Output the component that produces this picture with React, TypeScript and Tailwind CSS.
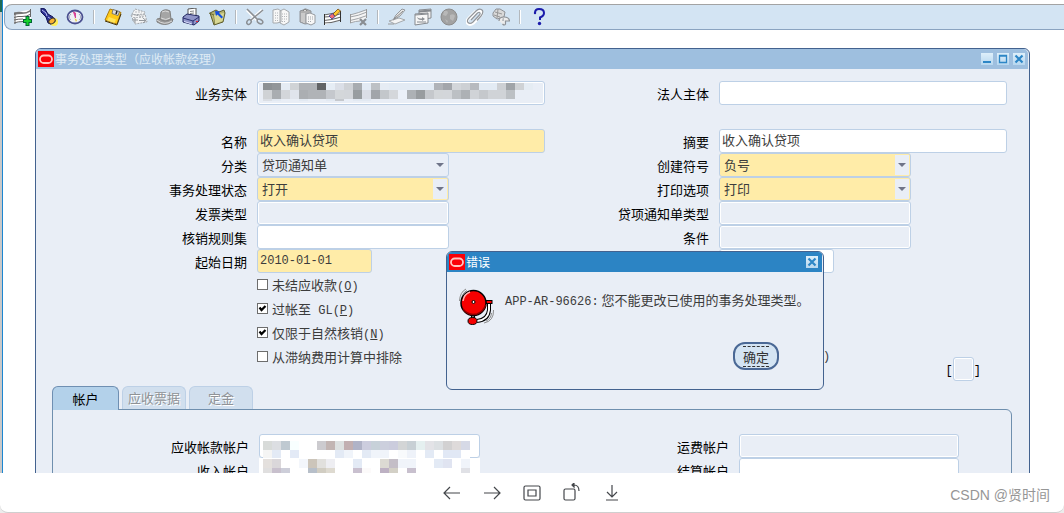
import { useId, useState } from "react";
import type { ReactNode } from "react";

const NAME_PIXELS = [
  {
    h: 7,
    cells:
      "8d9194 929699 e5ecf4 d0d3d6 b0b3b7 b0b3b7 626466 e6edf5 dbdfe7 cfd2d6 a8acb0 e3ebf4 bdc1c5 e6ecf4 e3ebf4 e3ebf4 e3ebf4 e3ebf4 e3ebf4 b0b3b8 a3a6ab d3d6da cdd0d4 b7babf e3ebf4 e3ebf4 cdd0d4 a0a4a8 cfd2d5 e5ecf3",
  },
  {
    h: 9,
    cells:
      "cfd2d5 a9adb1 d3d6da e0e4ec abaeb2 b0b3b7 b0b3b7 c5c8cd d4d7da d3d6da 989da0 dadee6 a1a5aa c3c7cb d4d7db ebf0f8 adb1b5 989c9f c5c8cc d3d6d9 d3d6da bcc0c4 adb1b5 d0d3d7 c5c8cc d0d3d7 d0d3d7 bcc0c4",
  },
  { h: 2, cells: "dadee4 e2e9f2 e9eef6 e9eef6 e2e9f2 e9eef6 e9eef6 e2e9f2 c5c8cd e9eef6 e2e9f2 e2e9f2" },
];

const RECEIVABLE_PIXELS = [
  {
    h: 9,
    cells:
      "d8dbd9 dcdee2 bfc9d1 f8ffff ffffff ffffff cccbcf c2b5b3 dde1e1 c2afb1 b0b3c7 cccdde c7d1d9 cccfdd cbccdd d3d5d6 c8d0d5 e5f0f0 e3e3e7 dce0e3 d2d1d2 dedada d6d9e6",
  },
  {
    h: 9,
    cells:
      "f5f5f4 e3eaf5 ffffff e3eaf6 ffffff ffffff ffffff ffffff e3eaf5 f0f4fa ffffff e3eaf5 f0f4fa f0f4fa ffffff f8fafc eef2f9 ffffff e3eaf5 ffffff e1e8f5 e1e8f5 ffffff",
  },
];

const REVENUE_PIXELS = [
  {
    h: 9,
    cells:
      "e4e0dd dad7da ffffff ffffff f3f6fb ccc5ba e1e0dd eeeef2 ffffff ffffff e3eaf5 ffffff ffffff dcdad3 c4bec7 f0f4fa f0f4fa ffffff ffffff e3eaf5 e0e4f1 ffffff f0f4fa",
  },
  {
    h: 9,
    cells:
      "e0dfdf c8c0cd cdced9 ffffff ffffff b7bfc9 d1cdc2 dedad0 ffffff ffffff c9c0cf fcfafa ffffff bdb1c3 d3d0c6 ffffff c8c0ce ffffff ffffff ffffff ffffff ffffff e0e1e6",
  },
];

function Mosaic({ rows, className }: { rows: typeof NAME_PIXELS; className: string }) {
  let y = 0;
  return (
    <svg width="270" height="18" shapeRendering="crispEdges" aria-hidden="true" className={`absolute ${className}`}>
      {rows.map((row, r) => {
        const top = y;
        y += row.h;
        return row.cells
          .split(" ")
          .map((c, i) => <rect key={`${r}-${i}`} x={i * 9} y={top} width="9" height={row.h} fill={`#${c}`} />);
      })}
    </svg>
  );
}

/* ---------- toolbar icons ---------- */

const TOOLS: ({ label: string; art: ReactNode } | null)[] = [
  {
    label: "新建",
    art: (
      <>
        <path d="M0 5 6 3.500 17 1.500V11L10 13 0 15Z" fill="#fff" />
        <path d="M0 5Q4 3 8 4T17 1.500V3.500Q12 6 8 6T0 7Z" fill="#777" />
        <path d="M0 9.500Q4 8 8 8.500T17 6M0 12Q4 11 9 11M0 15Q4 13.500 9 13.500M1 4V16M16.500 1V9" stroke="#666" fill="none" />
        <path d="M13.500 8V18M9 13H18" stroke="#063" strokeWidth="4" />
        <path d="M13.500 9V17M10 13H17" stroke="#16d02c" strokeWidth="2" />
      </>
    ),
  },
  {
    label: "查找",
    art: (
      <>
        <circle cx="14" cy="14" r="4" fill="#ffee58" />
        <path d="M1 0 5 1 8 6 13 9 14 13 11 16 8 15 6 9 1 4Z" fill="#2d3193" stroke="#111457" />
        <path d="M2 2 6 5 7 8M8 9 11 11" stroke="#b9bdf5" fill="none" />
        <ellipse cx="12" cy="13" rx="3.500" ry="2.500" transform="rotate(-35 12 13)" fill="#f9b233" stroke="#333" />
      </>
    ),
  },
  {
    label: "显示导航器",
    art: (
      <>
        <ellipse cx="9" cy="9" rx="7.500" ry="6.500" fill="#eef1f5" stroke="#4a5090" strokeWidth="1.800" />
        <path d="M5 12A5 4 0 0 1 5 6M13 6A5 4 0 0 1 13 12" stroke="#a3a9c4" fill="none" />
        <path d="M7.500 4 9.500 5 9.500 10Z" fill="#e43b9b" stroke="#d2358c" strokeWidth=".8" />
        <path d="M8.500 10 10 14 11 12Z" fill="#e3cd32" />
      </>
    ),
  },
  null,
  {
    label: "保存",
    art: (
      <>
        <path d="M6 1 17 4.500 13 16 1 12Z" fill="#ffc917" stroke="#a87a10" />
        <path d="M9 1.500 15.500 3.500 14 7.500 8 5.500Z" fill="#ddd" stroke="#666" strokeWidth=".8" />
        <path d="M13 3 12 6" stroke="#222" strokeWidth="1.500" />
        <path d="M5 9 12 11.500 10.500 15 3 12.500Z" fill="#ffe45b" />
        <path d="M1 13 13 17 17 6" stroke="#4a3504" fill="none" />
      </>
    ),
  },
  {
    label: "下一步",
    art: (
      <>
        <path d="M5 1 15 4 13 9 2 6Z M1 7 15 6 17 14 5 16Z" fill="#f3f4f5" stroke="#a2a6ab" strokeDasharray="2 1" />
        <path d="M5 4H12M5 7H14M3 9.500H13" stroke="#b9bcc0" strokeDasharray="2 1" />
        <path d="M2 12H8M5 9.500V15M9 12.500H16M13 10 16 12.500 13 15" stroke="#94989d" fill="none" />
      </>
    ),
  },
  {
    label: "切换责任",
    art: (
      <>
        <path d="M1 11Q8 8 17 11L16 14Q9 19 1 14Z" fill="#9b9b9b" stroke="#7f7f7f" />
        <path d="M5 4Q9 0 14 3L15 11Q9 15 4 11Z" fill="#a5a5a5" stroke="#808080" />
        <path d="M6 4Q9 2 13 4M5 10Q10 13 14 10M1 12Q8 18 16 13" stroke="#dadada" fill="none" />
      </>
    ),
  },
  {
    label: "打印",
    art: (
      <>
        <path d="M6 1 14 0 14 9 6 9Z" fill="#fff" stroke="#555" />
        <path d="M8 3.500 12 3M8 5.500 12 5" stroke="#888" />
        <path d="M1 9 5 6 17 8V13L12 17 1 14Z" fill="#8f95c8" stroke="#222760" />
        <path d="M1 10 11 13 17 9M11 13V17" stroke="#2b3073" fill="none" />
        <path d="M2 13.500 10 16" stroke="#dfe2ff" />
        <path d="M14 13.500h2" stroke="#e23" />
      </>
    ),
  },
  {
    label: "关闭窗体",
    art: (
      <>
        <path d="M2 5 8 2 11 4 16 2 17 5 15 14 6 17Z" fill="#b5b471" stroke="#5d5c2c" />
        <path d="M1 5 6 7 7 17" stroke="#6b6a33" fill="none" />
        <path d="M6 7 16 5 14.500 13 7 16Z" fill="#d9d894" />
        <path d="M7 3 12 3.500 11 5 15 9 13.500 10.500 9.500 6.500 8 8Z" fill="#1450e0" />
      </>
    ),
  },
  null,
  {
    label: "剪切",
    art: (
      <>
        <path d="M1 2 12 13M16 2 5 12" stroke="#fff" strokeWidth="3" />
        <path d="M1 1 12 12M17 2 5 12" stroke="#8b8f94" strokeWidth="1.600" />
        <ellipse cx="3" cy="14" rx="2" ry="2.500" transform="rotate(35 3 14)" fill="none" stroke="#8b8f94" strokeWidth="1.500" />
        <ellipse cx="14" cy="13.500" rx="3" ry="2" transform="rotate(30 14 13.500)" fill="none" stroke="#8b8f94" strokeWidth="1.500" />
      </>
    ),
  },
  {
    label: "复制",
    art: (
      <>
        <path d="M1 2 6 1 9 3V14L5 15 1 15Z M8 3 12 1 17 4V14L12 17 8 15Z" fill="#f7f7f7" stroke="#a5a9ad" />
        <path d="M3 5H7M3 7.500H7M3 10H7M3 12.500H7M10 6H15M10 8.500H15M10 11H15M10 13.500H14" stroke="#b4b7bb" strokeDasharray="1 1" />
      </>
    ),
  },
  {
    label: "粘贴",
    art: (
      <>
        <path d="M2 3 8 1 13 3V15L7 16 2 14Z" fill="#b0b0b0" stroke="#909499" />
        <path d="M5 3Q7-1 9 3" stroke="#777" fill="#ddd" />
        <path d="M4 5V14M6 5V15" stroke="#e4e4e4" />
        <path d="M8 6 12 5 17 7V15L13 17 8 15Z" fill="#f7f7f7" stroke="#979ba0" />
        <path d="M10 9H15M10 11H15M10 13.500H14" stroke="#a2a6ab" strokeDasharray="1 1" />
      </>
    ),
  },
  {
    label: "清除记录",
    art: (
      <>
        <path d="M0 7 17 4V13L10 14 0 17Z" fill="#fff" />
        <path d="M0 7Q8 6 17 3M0 9Q8 9 17 5.500M0 12.500Q8 12 17 9M0 15Q8 15 17 12" stroke="#666" strokeWidth="1.200" fill="none" />
        <path d="M.5 6V17M16.500 3V14" stroke="#333" />
        <path d="M9 6 14 1 16.500 3 11 8.500Z" fill="#ffc52e" stroke="#704710" strokeWidth=".8" />
        <path d="M5 8 8.500 5.500 11 8.500 8 11Z" fill="#f46d74" stroke="#353599" strokeWidth=".8" />
      </>
    ),
  },
  {
    label: "删除记录",
    art: (
      <>
        <path d="M0 7 17 2V10L10 13 0 15Z" fill="#f4f4f4" />
        <path d="M0 7Q8 5 17 1.500M0 9Q8 8 17 4M0 12.500Q8 11 17 7.500M0 15Q6 13 10 13" stroke="#a0a4a9" fill="none" />
        <path d="M.5 6V15M16.500 1V10" stroke="#999" />
        <path d="M10 11 16 17M16 11 10 17" stroke="#898d92" strokeWidth="2.200" />
      </>
    ),
  },
  null,
  {
    label: "编辑字段",
    art: (
      <>
        <path d="M1 13 11 10 17 12 7 16Z" fill="#f4f4f4" stroke="#a5a9ad" />
        <path d="M5 12 8 7 14 1 17 2 12 8Z" fill="#e9e9e9" stroke="#94989d" />
        <path d="M6 11 15 3" stroke="#888" />
        <path d="M0 16H6" stroke="#999" />
      </>
    ),
  },
  {
    label: "缩放",
    art: (
      <>
        <path d="M5 2 17 1V10L5 12Z" fill="#eee" stroke="#85898e" />
        <path d="M5 3.500 17 2.500" stroke="#85898e" strokeWidth="2" />
        <path d="M1 6 14 5V15L1 17Z" fill="#f7f7f7" stroke="#85898e" />
        <path d="M1 7 14 6M3 14H12" stroke="#85898e" />
        <path d="M3 9Q5 11 8 10.500V9L11 11 8 13V12Q4 12.500 3 9Z" fill="#8b8f94" />
      </>
    ),
  },
  {
    label: "翻译",
    art: (
      <>
        <circle cx="9" cy="9" r="8" fill="#a2a2a2" stroke="#8c8c8c" />
        <path d="M4 3Q8 2 8 5L6 8 3 7ZM10 7Q14 5 15 8L13 13 10 11ZM5 11 8 13 7 15Z" fill="#b8b8b8" />
      </>
    ),
  },
  {
    label: "附件",
    art: (
      <>
        <path d="M4 11 11 4Q14 1.500 15.500 4 16.500 6 14 8.500L7.500 15Q4 17.500 1.800 15.500 0 13 3 10L10 3" fill="none" stroke="#fff" strokeWidth="3" />
        <path
          d="M5 12 11.500 5Q13.500 3.500 14 5 14.500 6 13 7.500L7 14Q4 16.500 2 14.500 .5 12.500 3 10L10 3Q14-.5 16.500 2.500 17.500 5 15 8L11 12.500"
          fill="none"
          stroke="#92969b"
          strokeWidth="1.200"
        />
      </>
    ),
  },
  {
    label: "文件夹工具",
    art: (
      <>
        <path d="M1 5 4 1H8L13 4 12 9 5 11 1 8Z" fill="#d9d9d9" stroke="#8d9196" />
        <path d="M3 4 10 6M2 7 8 9M6 1 5 10" stroke="#999" fill="none" />
        <path d="M7 13Q7 9 12 9 17 9 17.500 13H13.500V16Q12.500 18 10.500 16" stroke="#8d9196" strokeWidth="1.200" fill="#ececec" />
        <path d="M10 13Q10 10 12 9V13Z" fill="#b9bcc0" />
      </>
    ),
  },
  null,
  {
    label: "帮助",
    art: (
      <>
        <path d="M5 5Q5 1 9 1 14 1 14 5 14 8 10 9.500V12" fill="none" stroke="#1b1baa" strokeWidth="2" />
        <circle cx="9.500" cy="15.500" r="1.700" fill="#1b1baa" />
        <circle cx="5" cy="5" r="1.200" fill="#1b1baa" />
      </>
    ),
  },
];

function Toolbar() {
  return (
    <div className="mt-1 ml-px h-[26px] flex items-center gap-2 pl-[9px] rounded-l-lg border border-r-0 border-t-[#a3a3a3] border-l-[#8aa3c0] border-b-[#8aa3c0] bg-[#d3e4f3]">
      {TOOLS.map((t, i) =>
        t ? (
          <button key={i} type="button" title={t.label} aria-label={t.label} className="shrink-0">
            <svg width="18" height="18" viewBox="0 0 18 18" className="block">
              {t.art}
            </svg>
          </button>
        ) : (
          <span key={i} className="w-1 shrink-0 flex justify-center">
            <span className="w-0.5 h-3.5 bg-white border-l border-[#b3b8bd]" />
          </span>
        ),
      )}
    </div>
  );
}

/* ---------- window chrome ---------- */

function OracleMark() {
  return (
    <svg width="16" height="16" viewBox="0 0 16 16" className="shrink-0" aria-hidden="true">
      <rect width="16" height="16" fill="#fb0007" />
      <rect x="2" y="4.500" width="12" height="7.500" rx="3.700" fill="none" stroke="#ffc4c0" strokeWidth="1.800" />
    </svg>
  );
}

function ChromeButton({ label, children }: { label: string; children: ReactNode }) {
  return (
    <button type="button" aria-label={label} className="size-3 bg-linear-to-b from-[#deeffa] to-[#b7d7ef]">
      <svg width="12" height="12" viewBox="0 0 12 12" fill="none" stroke="#2d86c6" strokeWidth="2" className="block">
        {children}
      </svg>
    </button>
  );
}

const closeGlyph = <path d="M2.500 2.500 9.500 9.500M9.500 2.500 2.500 9.500" strokeWidth="2.200" />;

/* ---------- form pieces ---------- */

const FIELD = "block h-6 border border-[#bdd0e6] rounded-[3px] text-[#3c3c3c] outline-none";
const WHITE = "bg-white";
const YELLOW = "bg-[#ffeca8]";
const GREY = "bg-[#e9eef6] shadow-[inset_0_0_0_1px_#fff]";
const MONO = "font-['Liberation_Mono',monospace] text-xs";

function Row({
  label,
  labelWidth,
  children,
}: {
  label: string;
  labelWidth: string;
  children: (id: string) => ReactNode;
}) {
  const id = useId();
  return (
    <div className="flex h-6 gap-2.5">
      <label htmlFor={id} className={`${labelWidth} shrink-0 pt-px text-right leading-6 text-black whitespace-nowrap`}>
        {label}
      </label>
      {children(id)}
    </div>
  );
}

function Field({ id, tone, width, value = "", mono }: { id: string; tone: string; width: string; value?: string; mono?: boolean }) {
  return (
    <input
      id={id}
      defaultValue={value}
      className={`${FIELD} ${tone} ${width} px-0.5 ${mono ? MONO : "pb-1"}`}
    />
  );
}

function Picker({ id, yellow, options }: { id: string; yellow?: boolean; options: string[] }) {
  return (
    <div className="relative w-48">
      <select id={id} className={`${FIELD} ${yellow ? YELLOW : "bg-[#e9eef6]"} w-full appearance-none px-1`}>
        {options.map((o) => (
          <option key={o}>{o}</option>
        ))}
      </select>
      <span className="absolute right-0.5 top-0.5 w-3.5 h-5 grid place-items-center bg-[#e9eef6] pointer-events-none">
        <svg width="8" height="4" viewBox="0 0 8 4">
          <path d="M0 0H8L4 4Z" fill="#6f7488" />
        </svg>
      </span>
    </div>
  );
}

function Check({ text, latin, hotkey, on }: { text: string; latin?: string; hotkey?: string; on?: boolean }) {
  const [checked, setChecked] = useState(!!on);
  return (
    <label className="ml-[221px] h-6 flex items-center gap-1 text-[#3c3c3c]">
      <span className="grid pb-0.5">
        <input
          type="checkbox"
          checked={checked}
          onChange={(e) => setChecked(e.target.checked)}
          className="col-start-1 row-start-1 appearance-none size-[11px] border border-[#6d6d6d] bg-white"
        />
        {checked && (
          <svg width="11" height="11" viewBox="0 0 11 11" className="col-start-1 row-start-1 pointer-events-none">
            <path d="M2.500 4.500 4.500 7 8.500 3" fill="none" stroke="#000" strokeWidth="2.200" />
          </svg>
        )}
      </span>
      <span>
        {text}
        {hotkey && (
          <span className={MONO}>
            {latin && ` ${latin}`}(<u>{hotkey}</u>)
          </span>
        )}
      </span>
    </label>
  );
}

function FormGrid() {
  const L = "w-[211px]";
  const R = "w-[164px]";
  return (
    <div className="flex pt-3">
      <div className="w-[509px] shrink-0">
        <div className="relative mb-6">
          <Row label="业务实体" labelWidth={L}>{(id) => <Field id={id} tone={GREY} width="w-72" />}</Row>
          <Mosaic rows={NAME_PIXELS} className="left-[227px] top-0.5" />
        </div>
        <Row label="名称" labelWidth={L}>{(id) => <Field id={id} tone={YELLOW} width="w-72" value="收入确认贷项" />}</Row>
        <Row label="分类" labelWidth={L}>{(id) => <Picker id={id} options={["贷项通知单"]} />}</Row>
        <Row label="事务处理状态" labelWidth={L}>{(id) => <Picker id={id} yellow options={["打开"]} />}</Row>
        <Row label="发票类型" labelWidth={L}>{(id) => <Field id={id} tone={GREY} width="w-48" />}</Row>
        <Row label="核销规则集" labelWidth={L}>{(id) => <Field id={id} tone={WHITE} width="w-48" />}</Row>
        <Row label="起始日期" labelWidth={L}>
          {(id) => <Field id={id} tone={YELLOW} width="w-[115px]" value="2010-01-01" mono />}
        </Row>
        <Check text="未结应收款" hotkey="O" />
        <Check text="过帐至" latin="GL" hotkey="P" on />
        <Check text="仅限于自然核销" hotkey="N" on />
        <Check text="从滞纳费用计算中排除" />
      </div>

      <div className="flex-1 min-w-0">
        <div className="mb-6">
          <Row label="法人主体" labelWidth={R}>{(id) => <Field id={id} tone={WHITE} width="w-72" />}</Row>
        </div>
        <Row label="摘要" labelWidth={R}>{(id) => <Field id={id} tone={WHITE} width="w-72" value="收入确认贷项" />}</Row>
        <Row label="创建符号" labelWidth={R}>{(id) => <Picker id={id} yellow options={["负号"]} />}</Row>
        <Row label="打印选项" labelWidth={R}>{(id) => <Picker id={id} yellow options={["打印"]} />}</Row>
        <Row label="贷项通知单类型" labelWidth={R}>{(id) => <Field id={id} tone={GREY} width="w-48" />}</Row>
        <Row label="条件" labelWidth={R}>{(id) => <Field id={id} tone={GREY} width="w-48" />}</Row>
        <Row label="" labelWidth={R}>{(id) => <Field id={id} tone={WHITE} width="w-[115px]" />}</Row>
        <div className={`mt-[72px] flex justify-between pl-[278px] pr-12 leading-6 ${MONO}`}>
          <span className="text-[#3c3c3c]">)</span>
          <label className="flex h-6 mt-3 leading-7 text-black">
            [
            <input className={`${FIELD} ${GREY} w-[21px]`} />]
          </label>
        </div>
      </div>
    </div>
  );
}

const TABS = ["帐户", "应收票据", "定金"];

function AccountTabs() {
  const [active, setActive] = useState(0);
  return (
    <div className="ml-4 mr-[17px] mt-[5px]">
      <div role="tablist" className="flex gap-[3px]">
        {TABS.map((t, i) => (
          <button
            key={t}
            type="button"
            role="tab"
            aria-selected={i === active}
            onClick={() => setActive(i)}
            className={
              i === active
                ? "relative -mb-px h-6 w-[67px] rounded-t-md border border-b-0 border-[#6f8fb2] bg-[#b3d1ea] text-black"
                : "h-[23px] w-16 rounded-t-md border border-b-0 border-[#bdd0e6] bg-[#d1dfee] text-[#8f9296] [text-shadow:1px_1px_#fff]"
            }
          >
            {t}
          </button>
        ))}
      </div>
      <div role="tabpanel" className="flex border border-[#6f8fae] rounded-tr-md pt-6 pb-10">
        <div>
          <div className="relative">
            <Row label="应收帐款帐户" labelWidth="w-[196px]">{(id) => <Field id={id} tone={WHITE} width="w-[221px]" />}</Row>
            <Mosaic rows={RECEIVABLE_PIXELS} className="left-[210px] top-[7px]" />
          </div>
          <div className="relative">
            <Row label="收入帐户" labelWidth="w-[196px]">
              {(id) => <input id={id} className="block h-6 w-[221px] bg-white outline-none" />}
            </Row>
            <Mosaic rows={REVENUE_PIXELS} className="left-[210px] top-px" />
          </div>
        </div>
        <div>
          <Row label="运费帐户" labelWidth="w-[249px]">{(id) => <Field id={id} tone={GREY} width="w-[220px]" />}</Row>
          <Row label="结算帐户" labelWidth="w-[249px]">{(id) => <Field id={id} tone={WHITE} width="w-[220px]" />}</Row>
        </div>
      </div>
    </div>
  );
}

/* ---------- error dialog ---------- */

function Bell() {
  return (
    <svg width="36" height="38" viewBox="0 0 36 38" fill="none" className="shrink-0" aria-hidden="true">
      <path d="M.5 13Q1 4 7 1M2.500 12Q3 5 8 2.500" stroke="#8c8c8c" />
      <path d="M34.500 22Q35 33 25 35M32.500 25Q32 31 27 33" stroke="#8c8c8c" />
      <path d="M30 15V22Q29 32 18 33" stroke="#000" strokeWidth="4" />
      <path d="M30 15V22Q29 32 18 33" stroke="#fff" strokeWidth="2" />
      <path d="M14 26V31" stroke="#000" strokeWidth="4" />
      <path d="M14 26V31" stroke="#bbb" strokeWidth="1.500" />
      <rect x="27" y="12.500" width="6" height="3" fill="#f00" stroke="#000" />
      <circle cx="14.500" cy="15" r="12.500" fill="#f50000" stroke="#000" strokeWidth="1.500" />
      <path d="M4 13Q5 6 11 4" stroke="#ffb3b3" strokeWidth="1.500" />
      <path d="M4 21Q9 28 18 26 25 23 26.500 17" stroke="#8d0000" strokeWidth="1.500" />
      <circle cx="14.500" cy="14" r="1.500" fill="#fff" stroke="#000" />
      <ellipse cx="13.500" cy="33" rx="4.500" ry="3.500" fill="#f50000" stroke="#000" />
    </svg>
  );
}

function ErrorDialog() {
  return (
    <div
      role="alertdialog"
      aria-labelledby="err-title"
      className="absolute left-[410px] top-[202px] w-[378px] rounded-md border border-[#43628f] bg-[#e9eef6] overflow-hidden"
    >
      <div className="h-5 flex items-center gap-px pl-0.5 pr-1 bg-[#2c84c4] mr-px">
        <OracleMark />
        <span id="err-title" className="flex-1 text-xs leading-5 text-white">
          错误
        </span>
        <ChromeButton label="关闭">{closeGlyph}</ChromeButton>
      </div>
      <div className="flex gap-2.5 pt-4 pl-3">
        <Bell />
        <p className="pt-1 leading-4 whitespace-nowrap text-[#3c3c3c]">
          <span className={MONO}>APP-AR-96626:</span> 您不能更改已使用的事务处理类型。
        </p>
      </div>
      <div className="flex justify-end mt-4 pr-11 pb-[19px]">
        <button
          type="button"
          className="w-[46px] h-7 rounded-xl border-2 border-[#4a6895] bg-[#d4e4f3] grid place-items-center text-[#333]"
        >
          <span className="h-[21px] leading-[19px] border-y border-dashed border-[#333]">确定</span>
        </button>
      </div>
    </div>
  );
}

function TransactionWindow() {
  return (
    <section className="relative mt-[18px] ml-8 mr-[34px] rounded-t-md border border-[#43628f] bg-[#e9eef6]">
      <header className="h-5 mr-px flex items-center gap-px pl-0.5 pr-[3px] rounded-t-[5px] bg-[#9ebfdf]">
        <OracleMark />
        <h1 className="flex-1 text-xs leading-5 text-[#dfebf5]">事务处理类型（应收帐款经理）</h1>
        <div className="flex gap-1">
          <ChromeButton label="最小化">
            <path d="M2 9H10" />
          </ChromeButton>
          <ChromeButton label="最大化">
            <path d="M2.500 2.500H9.500V9.500H2.500ZM2 3H10" strokeWidth="1.300" />
          </ChromeButton>
          <ChromeButton label="关闭">{closeGlyph}</ChromeButton>
        </div>
      </header>
      <FormGrid />
      <AccountTabs />
      <ErrorDialog />
    </section>
  );
}

/* ---------- viewer bar under the sheet ---------- */

const VIEWER = [
  { label: "上一张", d: "M18 10H2M8 4 2 10 8 16" },
  { label: "下一张", d: "M2 10H18M12 4 18 10 12 16" },
  { label: "原始尺寸", d: "M3.500 3H16.500Q18 3 18 4.500V15.500Q18 17 16.500 17H3.500Q2 17 2 15.500V4.500Q2 3 3.500 3ZM6 7H14V13H6Z" },
  { label: "旋转", d: "M3.500 6H11.500Q13 6 13 7.500V15.500Q13 17 11.500 17H3.500Q2 17 2 15.500V7.500Q2 6 3.500 6ZM10 2H12Q17 2 17 8M12 0 10 2 12 4Z" },
  { label: "下载", d: "M10 2V14M5 9 10 14 15 9M4 17H16" },
];

function ViewerBar() {
  return (
    <footer className="relative h-10 shrink-0 flex items-center justify-center gap-5 rounded-b-lg border-b border-[#cfcfcf] bg-white">
      {VIEWER.map((v) => (
        <button key={v.label} type="button" aria-label={v.label}>
          <svg width="20" height="20" viewBox="0 0 20 20" fill="none" stroke="#44474b" strokeWidth="1.200" className="block">
            <path d={v.d} />
          </svg>
        </button>
      ))}
      <span className="absolute right-3.5 top-3 text-sm text-[#969696] font-['Liberation_Sans','Noto_Sans_CJK_SC',sans-serif]">
        CSDN @贤时间
      </span>
    </footer>
  );
}

export default function App() {
  return (
    <div className="h-screen flex flex-col overflow-hidden bg-[#ececec] text-[13px] font-['Noto_Sans_CJK_SC',sans-serif]">
      <main className="flex-1 min-h-0 flex bg-white">
        <div className="w-[3px] shrink-0 border-r border-[#1c86d1] bg-linear-to-b from-[#1f6b55] from-[12px] to-[#c9c9c9] to-[12px]" />
        <div className="flex-1 min-w-0 overflow-hidden">
          <Toolbar />
          <TransactionWindow />
        </div>
      </main>
      <ViewerBar />
    </div>
  );
}
